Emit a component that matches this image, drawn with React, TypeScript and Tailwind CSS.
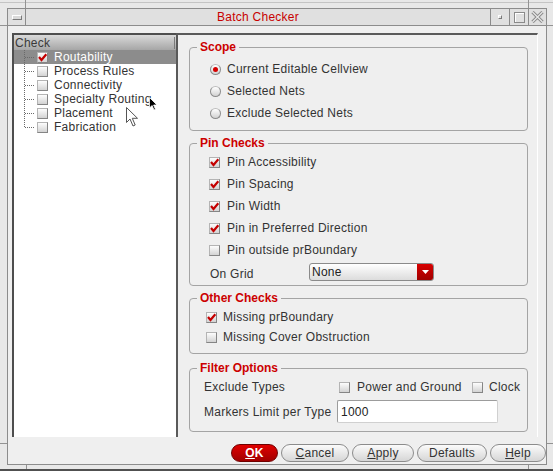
import React from 'react'

const Check = ({ checked = false }: { checked?: boolean }) => (
  <div className="relative size-[11px] shrink-0 border border-[#858585] border-t-[#b4b4b4] border-l-[#b4b4b4] bg-linear-to-b from-[#fdfdfd] to-[#d3d3d3]">
    {checked && (
      <svg className="absolute left-[-1px] top-[-1px]" width="11" height="11" viewBox="0 0 11 11">
        <path d="M2 5 L4.5 8 L9.3 2.2" fill="none" stroke="#c40000" strokeWidth="2.2" />
      </svg>
    )}
  </div>
)

const Radio = ({ on = false }: { on?: boolean }) => (
  <div className="flex size-[11px] shrink-0 items-center justify-center rounded-full border border-[#8c8c8c] border-t-[#bdbdbd] bg-linear-to-b from-white to-[#d2d2d2]">
    {on && <div className="size-[5px] rounded-full bg-[#d40000]" />}
  </div>
)

const TreeRow = ({ label, checked, selected, last }: { label: string; checked?: boolean; selected?: boolean; last?: boolean }) => (
  <div className={selected ? 'flex h-[14px] items-center bg-[#8c8c8c] text-white' : 'flex h-[14px] items-center'}>
    <svg width="23" height="14" className="shrink-0">
      <line x1="10.5" y1="0" x2="10.5" y2={last ? 8 : 14} stroke="#6a6a6a" strokeDasharray="1 1" />
      <line x1="11" y1="7.5" x2="21" y2="7.5" stroke="#6a6a6a" strokeDasharray="1 1" />
    </svg>
    <Check checked={checked} />
    <span className="ml-[6px]">{label}</span>
  </div>
)

const Legend = ({ children }: { children: React.ReactNode }) => (
  <legend className="ml-[7px] px-[3px] font-bold tracking-normal text-[#cc0000]">{children}</legend>
)

const Btn = ({ w, children }: { w: string; children: React.ReactNode }) => (
  <div className={`flex h-[18px] ${w} items-center justify-center rounded-full border border-[#8c8c8c] bg-linear-to-b from-[#fbfbfb] to-[#d6d6d6] text-[#333]`}>
    {children}
  </div>
)

export default function App() {
  return (
    <div className="relative flex h-[471px] w-[553px] flex-col overflow-hidden border-b-2 border-[#505050] bg-[#e8e8e8] font-['Liberation_Sans',Arial,sans-serif] text-[12px] leading-[14px] tracking-[0.25px] text-[#333]">
      {/* top frame band */}
      <div className="flex h-[8px] shrink-0 bg-[linear-gradient(to_bottom,transparent_2px,#c4c4c4_2px,#c4c4c4_3px,transparent_3px)]">
        <div className="w-[26px] border-r border-[#939393]" />
        <div className="flex-1 border-r border-[#939393]" />
        <div className="w-[24px]" />
      </div>

      <div className="flex flex-1">
        <div className="flex w-[7px] flex-col">
          <div className="h-[18px] border-b border-[#939393]" />
          <div className="flex-1" />
          <div className="h-[22px] border-t border-[#939393]" />
        </div>

        <div className="flex w-[540px] flex-col border border-[#8c8c8c]">
          {/* title bar */}
          <div className="flex h-[17px] shrink-0 border-b border-[#8c8c8c] bg-[#e0e0e0]">
            <div className="flex w-[18px] items-center justify-center border-r border-[#8c8c8c]">
              <div className="h-[5px] w-[10px] border border-[#7a7a7a] border-t-white border-l-white bg-[#dadada]" />
            </div>
            <div className="flex flex-1 items-center justify-center text-[#c80000]">Batch Checker</div>
            <div className="flex w-[19px] items-center justify-center border-l border-[#8c8c8c]">
              <div className="size-[4px] border border-[#7a7a7a] border-t-white border-l-white" />
            </div>
            <div className="flex w-[19px] items-center justify-center border-l border-[#8c8c8c]">
              <div className="size-[11px] border border-[#8a8a8a] shadow-[inset_1px_1px_0_#fff]" />
            </div>
            <div className="flex w-[18px] items-center justify-center border-l border-[#8c8c8c]">
              <svg width="13" height="12" viewBox="0 0 13 12">
                <path d="M1.5 1 L11.5 11 M11.5 1 L1.5 11" stroke="#8a8a8a" strokeWidth="3.2" />
                <path d="M1.5 1 L11.5 11 M11.5 1 L1.5 11" stroke="#e8e8e8" strokeWidth="1.2" />
              </svg>
            </div>
          </div>

          {/* dialog body */}
          <div className="flex flex-1 flex-col bg-[#efefef] pt-[7px]">
            <div className="flex h-[404px] pl-[4px]">
              {/* tree */}
              <div className="flex w-[164px] flex-col border-l-2 border-t-2 border-[#4e4e4e] bg-white">
                <div className="flex h-[15px] items-center bg-linear-to-b from-[#dadada] to-[#a6a6a6] pl-[1px] text-[#3a3a3a]">
                  <span className="flex-1">Check</span>
                  <div className="mr-[1px] h-[12px] w-px bg-[#7a7a7a]" />
                </div>
                <TreeRow label="Routability" checked selected />
                <TreeRow label="Process Rules" />
                <TreeRow label="Connectivity" />
                <TreeRow label="Specialty Routing" />
                <TreeRow label="Placement" />
                <TreeRow label="Fabrication" last />
              </div>

              {/* options */}
              <div className="w-[362px] border-l-2 border-t-2 border-r border-[#5a5a5a] border-r-white pl-[11px] pr-[9px] pt-[5px]">
                <fieldset className="rounded-[4px] border border-[#a4a4a4] pb-[6px] pt-[4px]">
                  <Legend>Scope</Legend>
                  <div className="flex h-[22px] items-center gap-[6px] pl-[20px]"><Radio on /><span>Current Editable Cellview</span></div>
                  <div className="flex h-[22px] items-center gap-[6px] pl-[20px]"><Radio /><span>Selected Nets</span></div>
                  <div className="flex h-[22px] items-center gap-[6px] pl-[20px]"><Radio /><span>Exclude Selected Nets</span></div>
                </fieldset>

                <fieldset className="mt-[5px] rounded-[4px] border border-[#a4a4a4] pb-[2px] pt-[1px]">
                  <Legend>Pin Checks</Legend>
                  <div className="flex h-[22px] items-center gap-[7px] pl-[19px]"><Check checked /><span>Pin Accessibility</span></div>
                  <div className="flex h-[22px] items-center gap-[7px] pl-[19px]"><Check checked /><span>Pin Spacing</span></div>
                  <div className="flex h-[22px] items-center gap-[7px] pl-[19px]"><Check checked /><span>Pin Width</span></div>
                  <div className="flex h-[22px] items-center gap-[7px] pl-[19px]"><Check checked /><span>Pin in Preferred Direction</span></div>
                  <div className="flex h-[22px] items-center gap-[7px] pl-[19px]"><Check /><span>Pin outside prBoundary</span></div>
                  <div className="flex h-[22px] items-center pl-[20px]">
                    <span className="mt-[4px] w-[99px]">On Grid</span>
                    <div className="flex h-[18px] w-[125px] overflow-hidden rounded-[3px] border border-[#8a8a8a] bg-linear-to-b from-white to-[#dcdcdc]">
                      <span className="flex-1 pl-[2px] leading-[16px] text-[#222]">None</span>
                      <div className="flex w-[16px] items-center justify-center bg-linear-to-b from-[#d80000] to-[#a00000]">
                        <svg width="7" height="4" viewBox="0 0 7 4"><path d="M0 0h7L3.5 4z" fill="white" /></svg>
                      </div>
                    </div>
                  </div>
                </fieldset>

                <fieldset className="mt-[5px] rounded-[4px] border border-[#a4a4a4] pb-[6px] pt-[2px]">
                  <Legend>Other Checks</Legend>
                  <div className="flex h-[20px] items-center gap-[6px] pl-[16px]"><Check checked /><span>Missing prBoundary</span></div>
                  <div className="flex h-[20px] items-center gap-[6px] pl-[16px]"><Check /><span>Missing Cover Obstruction</span></div>
                </fieldset>

                <fieldset className="mt-[7px] rounded-[4px] border border-[#a4a4a4] pb-[7px] pt-[1px]">
                  <Legend>Filter Options</Legend>
                  <div className="flex h-[22px] items-center pl-[14px]">
                    <span className="w-[135px]">Exclude Types</span>
                    <div className="flex w-[133px] items-center gap-[7px]"><Check /><span>Power and Ground</span></div>
                    <div className="flex items-center gap-[6px]"><Check /><span>Clock</span></div>
                  </div>
                  <div className="mt-[1px] flex h-[25px] items-center pl-[14px]">
                    <span className="w-[133px]">Markers Limit per Type</span>
                    <div className="flex h-[23px] w-[161px] items-center rounded-[2px] border border-[#d0d0d0] border-t-[#9c9c9c] border-l-[#9c9c9c] bg-white pl-[3px] text-[#222]">1000</div>
                  </div>
                </fieldset>
              </div>
            </div>

            {/* buttons */}
            <div className="mt-[7px] flex h-[18px] justify-end gap-[3px]">
              <div className="flex h-[18px] w-[47px] items-center justify-center rounded-full border border-[#700000] bg-linear-to-b from-[#e00000] to-[#a20000] font-bold text-white">
                <span><span className="underline">O</span>K</span>
              </div>
              <Btn w="w-[68px]"><span><span className="underline">C</span>ancel</span></Btn>
              <Btn w="w-[62px]"><span><span className="underline">A</span>pply</span></Btn>
              <Btn w="w-[70px]">Defaults</Btn>
              <Btn w="w-[56px]"><span><span className="underline">H</span>elp</span></Btn>
            </div>
          </div>
        </div>

        <div className="flex w-[6px] flex-col">
          <div className="h-[18px] border-b border-[#939393]" />
          <div className="flex-1" />
          <div className="h-[22px] border-t border-[#939393]" />
        </div>
      </div>

      {/* bottom frame band */}
      <div className="flex h-[4px] shrink-0">
        <div className="w-[27px] border-r border-[#939393]" />
        <div className="flex-1 border-r border-[#939393]" />
        <div className="w-[24px]" />
      </div>

      {/* mouse pointers */}
      <svg className="absolute left-[149px] top-[97px]" width="9" height="14" viewBox="0 0 9 14">
        <path d="M0.5 0.5 L0.5 11 L3 8.5 L5 13 L6.5 12.3 L4.6 8 L8 8 Z" fill="#000" stroke="#fff" strokeWidth="0.8" />
      </svg>
      <svg className="absolute left-[126px] top-[107px]" width="13" height="20" viewBox="0 0 13 20">
        <path d="M0.5 0.5 L0.5 15.5 L4 12 L7 19 L9.2 18 L6.3 11.3 L11.5 11.3 Z" fill="#fff" stroke="#555" strokeWidth="1" />
      </svg>
    </div>
  )
}
